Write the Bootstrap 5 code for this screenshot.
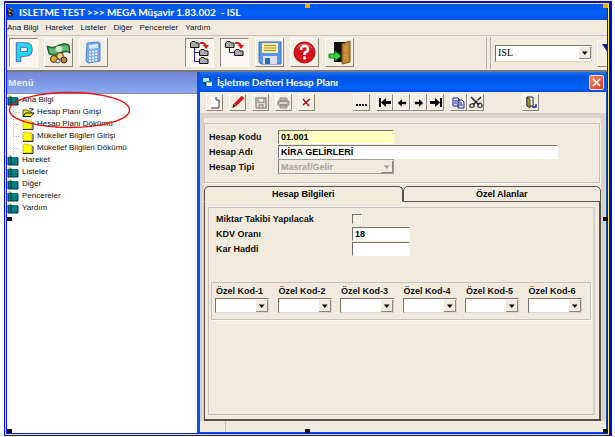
<!DOCTYPE html>
<html lang="tr">
<head>
<meta charset="utf-8">
<meta name="viewport" content="width=device-width, initial-scale=1">
<title>ISLETME TEST - MEGA Müşavir</title>
<link href="https://cdn.jsdelivr.net/npm/bootstrap@5.3.0/dist/css/bootstrap.min.css" rel="stylesheet">
<style>
:root{--face:#f1eadd;--edge:#8b877d;--band:#d9d2cf;--blue:#0000ff}
body{font:8px/12px "Liberation Sans",Arial,sans-serif;color:#111;background:#fff;padding:1px 3px 1px 4px}
button,input,select{font:inherit;border-radius:0;margin:0;padding:0}
.sel-outer{border:solid var(--blue);border-width:2px 3px 1px 1px;min-height:calc(100vh - 2px)}
.sel-mid{border:1px solid #ff0}
.sel-inner{border:solid #0818e8;border-width:0 1px 1px}
.title-text{font:bold 10px/16px Lato,"Open Sans",sans-serif;color:#fff;white-space:nowrap}
.app-title{height:16px;background:linear-gradient(#0054ea,#0060f8 60%,#0050e0)}
.app-menu{height:16px;background:var(--face);border-bottom:1px solid #c8c2b8;gap:7px;line-height:15px;padding-right:6px}
.app-menu a{color:#111}
.app-tools{height:36px;background:var(--face);border-bottom:2px solid #777b80;padding:2px 0 0 2px}
.big-btn{width:29px;height:29px;background:#f4eee3;border:1px solid;border-color:#fff #8b877d #8b877d #fff}
.big-btn.pressed{background:#fbf6f0;border-color:#8b877d #fff #fff #8b877d}
.group-one,.group-two{gap:6px}
.group-two{margin-left:77px}
.tool-end{border-left:1px solid #b9b3a9;height:32px;padding-left:3px;margin-top:-1px}
.tool-end>div{border-left:1px solid #b9b3a9;height:32px;padding-left:4px;gap:5px}
.drop{appearance:none;border:1px solid;border-color:#77736b #d8d2c6 #d8d2c6 #77736b;background:#fff url("data:image/svg+xml,%3Csvg xmlns='http://www.w3.org/2000/svg' width='12' height='12'%3E%3Cpath fill='%23f1eadd' d='M0 0h12v12H0z'/%3E%3Cpath d='M11.5 0V11.5H0' fill='none' stroke='%238b877d'/%3E%3Cpath d='M3 4.500h5.600L5.800 8z' fill='%23000'/%3E%3C/svg%3E") right center no-repeat}
.drop:disabled{opacity:1;color:#aaa498;background:var(--face) url("data:image/svg+xml,%3Csvg xmlns='http://www.w3.org/2000/svg' width='12' height='12'%3E%3Cpath fill='%23f1eadd' d='M0 0h12v12H0z'/%3E%3Cpath d='M11.500 0V11.500H0' fill='none' stroke='%238b877d'/%3E%3Cpath d='M3 4.500h5.600L5.800 8z' fill='%23a39e93'/%3E%3C/svg%3E") right center no-repeat;border-color:#a39e93 #a39e93 #a39e93 #8b877d}
.drop-firm{width:97px;height:17px;font:10px/14px "Liberation Serif",serif;padding-left:2px}
.cut-btn{width:10px;height:27px;border-right:0}
.side{flex:0 0 190px;background:#fff}
.side-head{height:21px;background:linear-gradient(#7388d4,#7e9be6 60%,#91aaf0);color:#e4ebff;font:bold 9px/21px "Open Sans",sans-serif;padding-left:1px}
.tree{border-top:1px solid #8a8f9c;margin-right:2px;padding:0}
.tree li{height:12px;gap:3px;white-space:nowrap}
.tree a{color:#111}
.tree ul{margin-left:6px;border-left:1px dotted #ccc}
.tree ul li::before{content:"";width:5px;border-top:1px dotted #bbb}
.tree svg{flex:none}
.win{border:solid #0a50e4;border-width:0 1px 1px 3px;background:var(--face)}
.win-title{height:20px;background:linear-gradient(#1c74f0,#0052e2 25%,#0064fa 80%,#0048d8);padding:0 2px 0 3px;gap:4px}
.close-btn{width:15px;height:15px;border:1px solid #f6d8d0;border-radius:2px;background:linear-gradient(135deg,#ee8a6c,#d93e14)}
.win-tools{height:21px;padding:2px 7px 2px 6px}
.sm-btn{width:17px;height:17px;background:#f4eee3;border:1px solid;border-color:#fff #8b877d #8b877d #fff}
.g6{gap:6px}
.clip-group{margin-right:32px}
.exit-btn{margin-right:60px}
.client{border:solid var(--band);border-width:5px 5px 0 4px;padding-top:5px;background:var(--face)}
.box{border:1px solid #c8c0be;box-shadow:1px 1px #fbf8f2}
.head-box{height:60px;padding:5px 4px;margin-right:1px}
.bold9{font:bold 9px/14px "Liberation Sans",Arial,sans-serif;color:#111}
.line{display:grid;align-items:center;height:15px}
.head-box .line{grid-template-columns:69px minmax(0,280px)}
.tab-box .line{grid-template-columns:136px 58px}
.entry{height:14px;width:100%;border:1px solid;border-color:#77736b #fff #fff #77736b;background:#fff;padding-left:2px;min-width:0}
.entry-code{background:#ffffc0;width:116px}
.drop-type{width:116px;height:15px;padding-left:2px}
.tabs-row{margin-top:3px;height:16px}
.tabs-row button{background:var(--face);border:1px solid #55524a;border-radius:5px 5px 0 0;text-align:center}
.tabs-row .on{border-bottom-color:var(--face)}
.tab-box{border:solid #55524a;border-width:0 2px 2px 1px;padding:5px 4px 4px 3px}
.tab-inner{border:1px solid #c8c0be;border-right:2px solid #d6cecb;padding:3px 2px 0 2px}
.tab-inner .line{margin-left:5px}
.tick{appearance:none;width:10px;height:10px;border:1px solid;border-color:#77736b #fff #fff #77736b;background:#f6f0e6}
.codes{height:38px;margin-top:26px;padding:1px 0 0 3px;display:grid;grid-template-columns:repeat(6,minmax(0,63px))}
.codes label{display:block;white-space:nowrap;padding-left:1px}
.codes .drop{width:54px;height:15px;display:block}
.foot{height:11px}
.foot span{width:26px;border-right:1px solid #c8c0be}
.ring{left:8px;top:91px;pointer-events:none}
.grip{width:5px;height:4px;background:#111}
.grip-o{background:#ffa500}
.t-mid{left:305px;top:4px}.t-right{right:7px;top:4px}
.l-mid{left:7px;top:217px}.r-mid{right:7px;top:217px}
.b-left{left:7px;bottom:4px}.b-mid{left:305px;bottom:4px}.b-right{right:7px;bottom:4px}
</style>
<script src="https://cdn.jsdelivr.net/npm/bootstrap@5.3.0/dist/js/bootstrap.bundle.min.js"></script>
</head>
<body class="position-relative min-vh-100">
<svg width="0" height="0" class="position-absolute" aria-hidden="true">
<symbol id="book" viewBox="0 0 12 11"><path d="M1 2l3-1 1 1h6v8H1z" fill="#007c7c"/><path d="M1 2v8h10V3M4 1v9" fill="none" stroke="#034"/><path d="M1 1h3l1 1" stroke="#cc0" fill="none"/></symbol>
<symbol id="fold" viewBox="0 0 12 11"><path d="M1 2l1-1h3l1 1h4v8H1z" fill="#ff0" stroke="#a90" stroke-width=".6"/><path d="M1 10.500h10V3" fill="none" stroke="#222"/></symbol>
<symbol id="open" viewBox="0 0 12 11"><path d="M1 3h4l1 1h3v5H1z" fill="#ee0" stroke="#333" stroke-width=".8"/><path d="M1 9.500L3.500 6H12L9 9.500z" fill="#ee0" stroke="#111"/><path d="M7 2q2-2 4 1M11 1v2H9" fill="none" stroke="#111" stroke-width=".8"/></symbol>
<symbol id="dir" viewBox="0 0 10 7"><path d="M.5 2L2 .5h3L6 2h3v4.500H.5z" fill="#aaa" stroke="#111"/></symbol>
<symbol id="arrow" viewBox="0 0 12 11"><path d="M1 5.500L6 1v3h5v3H6v3z" fill="#000"/></symbol>
</svg>
<div class="sel-outer d-flex flex-column">
<div class="sel-mid d-flex flex-column flex-grow-1">
<div class="sel-inner d-flex flex-column flex-grow-1">
<header class="app-title d-flex align-items-center">
<svg width="8" height="12" viewBox="0 0 10 12" aria-hidden="true"><path d="M0 2l3-1 3 2 2 3-1 5-4 1-3-3z" fill="#222"/><path d="M1 3l3 1M2 6l3-1 2 2M2 9l3 1" stroke="#ddd"/><path d="M4 1l3 2" stroke="#fc4"/></svg>
<h1 class="title-text m-0 ms-1">ISLETME TEST &gt;&gt;&gt; MEGA Müşavir 1.83.002 &nbsp;- ISL</h1>
</header>
<nav class="app-menu d-flex" aria-label="Ana menü">
<a class="text-decoration-none text-nowrap" href="#">Ana Bilgi</a><a class="text-decoration-none" href="#">Hareket</a><a class="text-decoration-none" href="#">Listeler</a><a class="text-decoration-none" href="#">Diğer</a><a class="text-decoration-none" href="#">Pencereler</a><a class="text-decoration-none" href="#">Yardım</a>
</nav>
<div class="app-tools d-flex overflow-hidden" role="toolbar" aria-label="Araçlar">
<div class="group-one d-flex">
<button class="big-btn pressed d-flex justify-content-center align-items-center" aria-label="Plan"><svg width="20" height="23" viewBox="0 0 20 23"><path d="M4.500 21V4H11q5 0 5 4.500T11 13H5" fill="none" stroke="#7048a0" stroke-width="5.400"/><path d="M4.500 20.500V4H11q5 0 5 4.500T11 13H5" fill="none" stroke="#10dff2" stroke-width="3.800"/></svg></button>
<button class="big-btn d-flex justify-content-center align-items-center" aria-label="Para"><svg width="25" height="23" viewBox="0 0 25 23"><path d="M1 5q6 3 12-1 6-3 10 0l1 8q-5-3-10 1-6 3-11 0z" fill="#2e8b45" stroke="#125522"/><path d="M3 7q6 2 10-1 5-3 9-1l1 5q-5-2-10 1-5 3-9 1z" fill="#67b779"/><ellipse cx="13" cy="8" rx="3.500" ry="3" fill="#d3e9ca"/><circle cx="8" cy="18" r="3.500" fill="#d9a53a" stroke="#5a3510"/><circle cx="14" cy="15" r="3.300" fill="#f2d283" stroke="#5a3510"/><circle cx="18" cy="19" r="3" fill="#b9874a" stroke="#432309"/><circle cx="12" cy="20" r="2" fill="#ddd" stroke="#555"/></svg></button>
<button class="big-btn d-flex justify-content-center align-items-center" aria-label="Hesap makinesi"><svg width="17" height="23" viewBox="0 0 17 23"><path d="M2 2l11-1 2 1v18l-12 2-2-2z" fill="#75a9ec" stroke="#4c86d4"/><path d="M4 4l9-1v4l-9 1z" fill="#d8edfb"/><path d="M4 11l9-1M4 14l9-1M4 17l9-1M4 20l9-1" stroke="#e7f2ff" stroke-width="2" stroke-dasharray="2 1"/><path d="M12 11v8" stroke="#e8a36a" stroke-dasharray="1 2"/></svg></button>
</div>
<div class="group-two d-flex">
<button class="big-btn pressed d-flex justify-content-center align-items-center" aria-label="Ağacı aç"><svg width="22" height="25" viewBox="0 0 22 25"><path d="M5.500 7v14.500H11M5.500 12.500H11" fill="none" stroke="#2020b0"/><use href="#dir" x="1" y="1" width="10" height="7"/><use href="#dir" x="10" y="9" width="10" height="7"/><use href="#dir" x="10" y="17" width="10" height="7"/><path d="M11 3q5-1 6 3" fill="none" stroke="#e01010" stroke-width="1.800"/><path d="M14 5h6l-3 4z" fill="#e01010"/></svg></button>
<button class="big-btn pressed d-flex justify-content-center align-items-center" aria-label="Ağacı kapat"><svg width="22" height="25" viewBox="0 0 22 25"><path d="M5.500 7v5.500H11" fill="none" stroke="#2020b0"/><use href="#dir" x="1" y="1" width="10" height="7"/><use href="#dir" x="10" y="9" width="10" height="7"/><path d="M11 3q5-1 6 3" fill="none" stroke="#e01010" stroke-width="1.800"/><path d="M14 5h6l-3 4z" fill="#e01010"/></svg></button>
<button class="big-btn d-flex justify-content-center align-items-center" aria-label="Kaydet"><svg width="24" height="24" viewBox="0 0 24 24"><path d="M1 1h22v22H3l-2-2z" fill="#5795e6" stroke="#3a70c4"/><path d="M4 2h16v10H4z" fill="#fbf099"/><path d="M6 4.500h12M6 7h12M6 9.500h12" stroke="#a88c30"/><path d="M5 15h14v8H5z" fill="#dce2ea"/><path d="M7 17h5v6H7z" fill="#3468bd"/></svg></button>
<button class="big-btn d-flex justify-content-center align-items-center" aria-label="Yardım"><svg width="23" height="23" viewBox="0 0 23 23"><circle cx="11.500" cy="11.500" r="10.500" fill="#d8101a" stroke="#a80810"/><path d="M4 7q7-8 15 0" stroke="#f27b7d" fill="none"/><path d="M8 9q0-4 3.500-4T15 8.500q0 1.500-2 2.500t-1.500 3" fill="none" stroke="#fff" stroke-width="2.600"/><circle cx="11.500" cy="17" r="1.700" fill="#fff"/></svg></button>
<button class="big-btn d-flex justify-content-center align-items-center" aria-label="Çıkış"><svg width="25" height="25" viewBox="0 0 25 25"><path d="M7 2h16v20H7z" fill="#101010"/><path d="M15 4l8-3v21l-8 2z" fill="#bd842a" stroke="#7b5012"/><path d="M17 6l4-1v6l-4 1zM17 14l4-1v6l-4 1z" fill="#c8923a"/><path d="M2 14h6v-3l6 5-6 5v-3H2z" fill="#3ed345" stroke="#158020"/></svg></button>
</div>
<div class="tool-end ms-auto"><div class="d-flex align-items-center">
<select class="drop drop-firm" aria-label="Firma"><option>ISL</option></select>
<button class="big-btn cut-btn overflow-hidden" aria-label="Filtre"><svg class="d-block" width="10" height="18" viewBox="0 0 10 18"><path d="M4 0h6v9z" fill="#1a1aa0"/></svg></button>
</div></div>
</div>
<main class="d-flex flex-grow-1">
<aside class="side">
<h2 class="side-head m-0">Menü</h2>
<ul class="tree list-unstyled m-0">
<li class="d-flex align-items-center"><svg width="12" height="11"><use href="#book"/></svg><a class="text-decoration-none" href="#">Ana Bilgi</a></li>
<li class="h-auto"><ul class="list-unstyled">
<li class="d-flex align-items-center"><svg width="12" height="11"><use href="#open"/></svg><a class="text-decoration-none" href="#">Hesap Planı Girişi</a></li>
<li class="d-flex align-items-center"><svg width="12" height="11"><use href="#fold"/></svg><a class="text-decoration-none" href="#">Hesap Planı Dökümü</a></li>
<li class="d-flex align-items-center"><svg width="12" height="11"><use href="#fold"/></svg><a class="text-decoration-none" href="#">Mükellef Bilgileri Girişi</a></li>
<li class="d-flex align-items-center"><svg width="12" height="11"><use href="#fold"/></svg><a class="text-decoration-none" href="#">Mükellef Bilgileri Dökümü</a></li>
</ul></li>
<li class="d-flex align-items-center"><svg width="12" height="11"><use href="#book"/></svg><a class="text-decoration-none" href="#">Hareket</a></li>
<li class="d-flex align-items-center"><svg width="12" height="11"><use href="#book"/></svg><a class="text-decoration-none" href="#">Listeler</a></li>
<li class="d-flex align-items-center"><svg width="12" height="11"><use href="#book"/></svg><a class="text-decoration-none" href="#">Diğer</a></li>
<li class="d-flex align-items-center"><svg width="12" height="11"><use href="#book"/></svg><a class="text-decoration-none" href="#">Pencereler</a></li>
<li class="d-flex align-items-center"><svg width="12" height="11"><use href="#book"/></svg><a class="text-decoration-none" href="#">Yardım</a></li>
</ul>
</aside>
<section class="win flex-grow-1 d-flex flex-column">
<div class="win-title d-flex align-items-center">
<svg width="10" height="10" viewBox="0 0 10 10" aria-hidden="true"><path d="M0 1h6v4H0z" fill="#bfe8f4"/><path d="M3 4h6v5H3z" fill="#fff"/><path d="M3 4h6v1.500H3z" fill="#1aa090"/><path d="M1 6h2v3" stroke="#123" fill="none"/></svg>
<h2 class="title-text m-0">İşletme Defteri Hesap Planı</h2>
<button class="close-btn ms-auto d-flex justify-content-center align-items-center" aria-label="Kapat"><svg width="9" height="9" viewBox="0 0 9 9"><path d="M1 1l7 7M8 1L1 8" stroke="#fff" stroke-width="1.700"/></svg></button>
</div>
<div class="win-tools d-flex" role="toolbar" aria-label="Kayıt işlemleri">
<div class="d-flex g6">
<button class="sm-btn d-flex justify-content-center align-items-center" aria-label="Yeni"><svg width="12" height="13" viewBox="0 0 12 13"><path d="M2 1h5l3 3v8H2z" fill="#fff"/><path d="M7 1v3h3v8H2" fill="none" stroke="#333"/></svg></button>
<button class="sm-btn d-flex justify-content-center align-items-center" aria-label="Düzenle"><svg width="14" height="13" viewBox="0 0 14 13"><path d="M12 1L4 9" stroke="#d81818" stroke-width="3.500"/><path d="M5 10l-3.500 2 .5-4z" fill="#222"/></svg></button>
<button class="sm-btn d-flex justify-content-center align-items-center" aria-label="Kaydet"><svg width="12" height="12" viewBox="0 0 12 12"><path d="M1 1h10v10H2l-1-1z" fill="#eee8dc" stroke="#999489" stroke-width="1.600"/><path d="M3 1v4.500h6V1M4 11V8h4v3" fill="none" stroke="#999489" stroke-width="1.300"/></svg></button>
<button class="sm-btn d-flex justify-content-center align-items-center" aria-label="Yazdır"><svg width="13" height="12" viewBox="0 0 13 12"><path d="M3 1h7v3H3zM1 4h11v4H1zM3 8h7v3H3z" fill="#bdb7ab" stroke="#8f8a80"/><path d="M3 6h7" stroke="#fff"/></svg></button>
<button class="sm-btn d-flex justify-content-center align-items-center" aria-label="Sil"><svg width="9" height="9" viewBox="0 0 9 9"><path d="M1 1l6 7M8 1L1 7" stroke="#b01414" stroke-width="1.500"/></svg></button>
</div>
<div class="d-flex ms-auto g6">
<button class="sm-btn d-flex justify-content-center align-items-center" aria-label="Diğer"><svg width="12" height="6" viewBox="0 0 12 6"><path d="M0 4h2v2H0zM3 4h2v2H3zM6 4h2v2H6zM9 4h2v2H9z"/></svg></button>
<div class="d-flex">
<button class="sm-btn d-flex justify-content-center align-items-center" aria-label="İlk"><svg width="12" height="11" viewBox="0 0 12 11"><path d="M1 1v9" stroke="#000" stroke-width="2"/><path d="M2 5.500L7 1v3h5v3H7v3z"/></svg></button>
<button class="sm-btn d-flex justify-content-center align-items-center" aria-label="Önceki"><svg width="10" height="10"><use href="#arrow"/></svg></button>
<button class="sm-btn d-flex justify-content-center align-items-center" aria-label="Sonraki"><svg width="10" height="10" viewBox="0 0 12 11"><path d="M11 5.500L6 1v3H1v3h5v3z"/></svg></button>
<button class="sm-btn d-flex justify-content-center align-items-center" aria-label="Son"><svg width="12" height="11" viewBox="0 0 12 11"><path d="M11 1v9" stroke="#000" stroke-width="2"/><path d="M10 5.500L5 1v3H0v3h5v3z"/></svg></button>
</div>
<div class="d-flex clip-group">
<button class="sm-btn d-flex justify-content-center align-items-center" aria-label="Kopyala"><svg width="13" height="12" viewBox="0 0 13 12"><path d="M1 1h5l1 1v7H1zM6 3h4l2 2v6H6z" fill="#e8e8fa" stroke="#202090"/><path d="M2 4h3M2 6h3M8 6h2M8 8h3" stroke="#202090"/></svg></button>
<button class="sm-btn d-flex justify-content-center align-items-center" aria-label="Kes"><svg width="14" height="13" viewBox="0 0 14 13"><path d="M2 1l8 8M12 1L4 9" stroke="#222" stroke-width="1.500"/><path d="M1 9q3-3 4 0t-4 2zM9 8q3-2 4 1t-4 2z" fill="none" stroke="#222" stroke-width="1.200"/><path d="M7 4l3 1" stroke="#bb9"/></svg></button>
</div>
<button class="sm-btn exit-btn d-flex justify-content-center align-items-center" aria-label="Çık"><svg width="12" height="13" viewBox="0 0 12 13"><path d="M2 1h6v9H2z" fill="#fff" stroke="#222"/><path d="M2 1l3 2v9l-3-2z" fill="#a8a020" stroke="#222" stroke-width=".8"/><path d="M7 11h4V8" fill="none" stroke="#1818b0" stroke-width="1.400"/></svg></button>
</div>
</div>
<form class="client flex-grow-1 d-flex flex-column bold9">
<div class="box head-box">
<div class="line"><label for="kod">Hesap Kodu</label><input class="entry entry-code" id="kod" value="01.001"></div>
<div class="line"><label for="adi">Hesap Adı</label><input class="entry" id="adi" value="KİRA GELİRLERİ"></div>
<div class="line"><label for="tip">Hesap Tipi</label><select class="drop drop-type" id="tip" disabled><option>Masraf/Gelir</option></select></div>
</div>
<div class="tabs-row d-flex" role="tablist">
<button type="button" class="on w-50" role="tab" aria-selected="true">Hesap Bilgileri</button><button type="button" class="w-50" role="tab" aria-selected="false">Özel Alanlar</button>
</div>
<div class="tab-box flex-grow-1 d-flex flex-column">
<div class="tab-inner flex-grow-1">
<div class="line"><label for="mik">Miktar Takibi Yapılacak</label><input class="tick" id="mik" type="checkbox"></div>
<div class="line"><label for="kdv">KDV Oranı</label><input class="entry" id="kdv" value="18"></div>
<div class="line"><label for="kar">Kar Haddi</label><input class="entry" id="kar"></div>
<div class="box codes">
<div><label for="k1">Özel Kod-1</label><select class="drop" id="k1"></select></div>
<div><label for="k2">Özel Kod-2</label><select class="drop" id="k2"></select></div>
<div><label for="k3">Özel Kod-3</label><select class="drop" id="k3"></select></div>
<div><label for="k4">Özel Kod-4</label><select class="drop" id="k4"></select></div>
<div><label for="k5">Özel Kod-5</label><select class="drop" id="k5"></select></div>
<div><label for="k6">Özel Kod-6</label><select class="drop" id="k6"></select></div>
</div>
</div>
</div>
</form>
<div class="foot d-flex"><span></span></div>
</section>
</main>
</div>
</div>
</div>
<svg class="ring position-absolute" width="124" height="38" viewBox="0 0 124 38" aria-hidden="true"><ellipse cx="61.500" cy="19" rx="60" ry="17.500" fill="none" stroke="#e81010" stroke-width="1.400"/></svg>
<i class="grip grip-o position-absolute t-mid"></i><i class="grip grip-o position-absolute t-right"></i>
<i class="grip position-absolute l-mid"></i><i class="grip position-absolute r-mid"></i>
<i class="grip position-absolute b-left"></i><i class="grip position-absolute b-mid"></i><i class="grip position-absolute b-right"></i>
</body>
</html>
